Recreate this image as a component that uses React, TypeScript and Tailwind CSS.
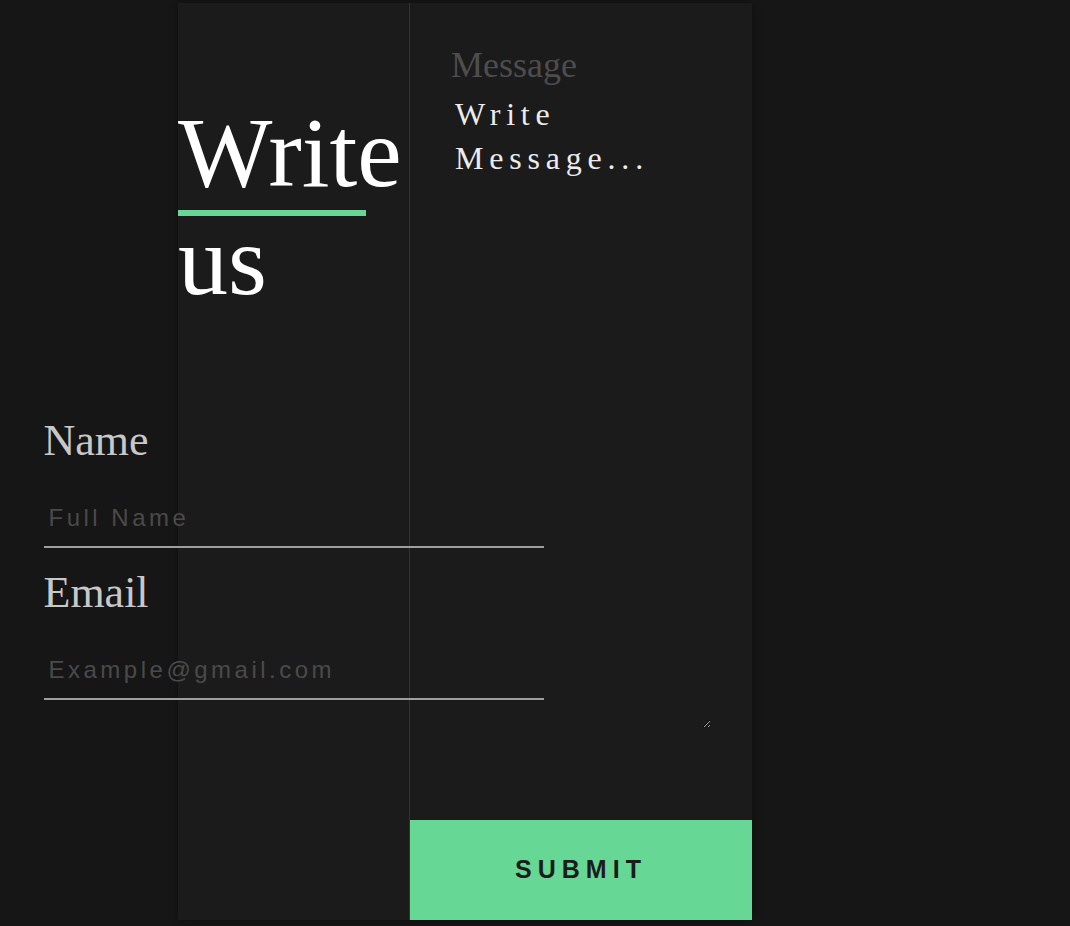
export default function App() {
	return (
		<div className="min-h-[926px] w-full overflow-hidden bg-[#161616] font-['Liberation_Serif',serif]">
			<div className="ml-[178px] mt-[3px] flex h-[917px] w-[574px] bg-[#1b1b1b] shadow-[0_0_8px_rgba(0,0,0,0.35)]">
				{/* left column */}
				<div className="flex w-[232px] shrink-0 flex-col items-center border-r border-[#313131] pt-[96px]">
					<h1 className="relative w-full text-[100px] font-normal leading-[108px] text-white">
						Write us
						<span className="absolute left-0 top-[111px] h-[6px] w-[188px] bg-[#66d794]"></span>
					</h1>
					<div className="mt-[102px] flex w-[500px] shrink-0 flex-col">
						<label className="text-[44px] leading-[48px] text-[#c8c8c8]">Name</label>
						<input
							type="text"
							placeholder="Full Name"
							className="mt-[39px] h-[44px] w-full border-b-2 border-[#9e9e9e] bg-transparent pb-[14px] pl-[5px] font-['Liberation_Sans',sans-serif] text-[24px] tracking-[3.5px] text-[#c8c8c8] outline-none placeholder:text-[#4a4a4a]"
						/>
						<label className="mt-[21px] text-[44px] leading-[48px] text-[#c8c8c8]">Email</label>
						<input
							type="email"
							placeholder="Example@gmail.com"
							className="mt-[39px] h-[44px] w-full border-b-2 border-[#9e9e9e] bg-transparent pb-[14px] pl-[5px] font-['Liberation_Sans',sans-serif] text-[24px] tracking-[3.5px] text-[#c8c8c8] outline-none placeholder:text-[#4a4a4a]"
						/>
					</div>
				</div>

				{/* right column */}
				<div className="flex flex-1 flex-col">
					<div className="flex flex-1 flex-col px-[41px] pt-[42px]">
						<label className="text-[36px] leading-[40px] text-[#4d4d4d]">Message</label>
						<textarea
							placeholder="Write Message..."
							className="mt-[3px] h-[640px] w-full resize bg-transparent p-[4px] text-[32px] leading-[44px] tracking-[5.8px] text-[#ececec] outline-none placeholder:text-[#ececec]"
						></textarea>
					</div>
					<button className="h-[100px] w-full bg-[#66d794] font-['Liberation_Sans',sans-serif] text-[25px] font-bold tracking-[6px] text-[#1c1c1c]">
						SUBMIT
					</button>
				</div>
			</div>
		</div>
	)
}
